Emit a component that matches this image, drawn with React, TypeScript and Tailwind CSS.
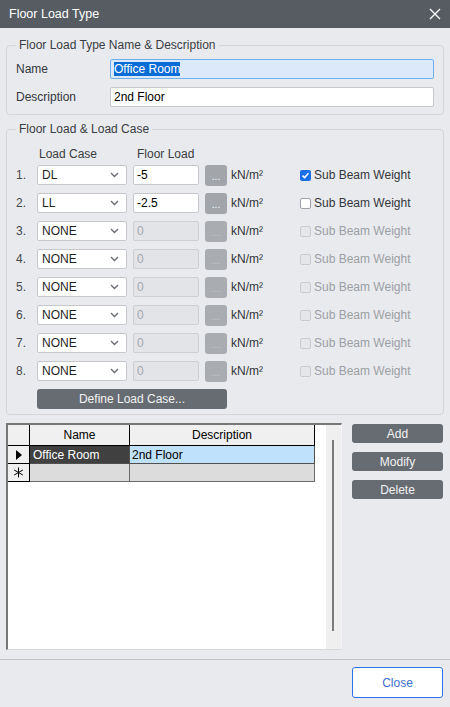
import { useState } from "react";

interface LoadRow {
  n: number;
  loadCase: string;
  floorLoad: string;
  enabled: boolean;
  checked: boolean;
}

const rows: LoadRow[] = [
  { n: 1, loadCase: "DL", floorLoad: "-5", enabled: true, checked: true },
  { n: 2, loadCase: "LL", floorLoad: "-2.5", enabled: true, checked: false },
  { n: 3, loadCase: "NONE", floorLoad: "0", enabled: false, checked: false },
  { n: 4, loadCase: "NONE", floorLoad: "0", enabled: false, checked: false },
  { n: 5, loadCase: "NONE", floorLoad: "0", enabled: false, checked: false },
  { n: 6, loadCase: "NONE", floorLoad: "0", enabled: false, checked: false },
  { n: 7, loadCase: "NONE", floorLoad: "0", enabled: false, checked: false },
  { n: 8, loadCase: "NONE", floorLoad: "0", enabled: false, checked: false },
];

const Chevron = () => (
  <svg width="9" height="6" viewBox="0 0 9 6">
    <path d="M1 1 L4.5 4.5 L8 1" stroke="#6b6f75" strokeWidth="1.4" fill="none" />
  </svg>
);

const LoadCaseRow = ({ row }: { row: LoadRow }) => {
  const [checked, setChecked] = useState(row.checked);
  return (
    <div className="flex items-center h-[20px]">
      <span className="w-[21px] text-[#45484d]">{row.n}.</span>
      <div className="w-[90px] h-[20px] bg-white border border-[#c6c8cd] rounded-[2px] flex items-center justify-between pl-[4px] pr-[7px] text-[#1f1f1f]">
        <span>{row.loadCase}</span>
        <Chevron />
      </div>
      <div
        className={
          row.enabled
            ? "ml-[6px] w-[66px] h-[20px] bg-white border border-[#c6c8cd] rounded-[2px] flex items-center px-[3px] text-black"
            : "ml-[6px] w-[66px] h-[20px] bg-[#e3e4e8] border border-[#cdcfd3] rounded-[2px] flex items-center px-[3px] text-[#a3a6ab]"
        }
      >
        {row.floorLoad}
      </div>
      <div
        className={
          row.enabled
            ? "ml-[6px] w-[22px] h-[21px] bg-[#a2a6ab] rounded-[3px] flex items-center justify-center text-[10px] text-white leading-none pt-[3px]"
            : "ml-[6px] w-[22px] h-[21px] bg-[#a9adb2] rounded-[3px] flex items-center justify-center text-[10px] text-[#c9ccd0] leading-none pt-[3px]"
        }
      >
        ...
      </div>
      <span className="ml-[4px] w-[69px] text-[#34373c]">kN/m²</span>
      <div className="flex items-center">
        {row.enabled ? (
          checked ? (
            <button
              onClick={() => setChecked(false)}
              className="w-[11px] h-[11px] rounded-[2px] bg-[#1a6fe6] flex items-center justify-center"
            >
              <svg width="9" height="9" viewBox="0 0 9 9">
                <path d="M1.5 4.6 L3.6 6.6 L7.5 2.3" stroke="white" strokeWidth="1.5" fill="none" />
              </svg>
            </button>
          ) : (
            <button
              onClick={() => setChecked(true)}
              className="w-[11px] h-[11px] rounded-[2px] bg-white border border-[#9fa3a9]"
            />
          )
        ) : (
          <div className="w-[11px] h-[11px] rounded-[2px] bg-[#e5e6e9] border border-[#c9cbcf]" />
        )}
        <span className={row.enabled ? "ml-[3px] text-[#34373c]" : "ml-[3px] text-[#9c9fa4]"}>
          Sub Beam Weight
        </span>
      </div>
    </div>
  );
};

const App = () => {
  return (
    <div className="w-[450px] h-[707px] bg-[#e9eaee] flex flex-col overflow-hidden text-[12px] leading-[16px] font-['Liberation_Sans',Arial,sans-serif]">
      <div className="h-[28px] bg-[#575c63] flex items-center justify-between pl-[9px] pr-[9px] text-white text-[12.5px] shrink-0">
        <span>Floor Load Type</span>
        <svg width="12" height="12" viewBox="0 0 12 12">
          <path d="M1 1 L11 11 M11 1 L1 11" stroke="white" strokeWidth="1.3" />
        </svg>
      </div>

      <div className="px-[6px] pt-[9px] flex flex-col">
        <fieldset className="border border-[#d4d6da] rounded-[4px] pl-[9px] pr-[9px] pb-[7px]">
          <legend className="px-[3px] text-[#3a3d42]">Floor Load Type Name &amp; Description</legend>
          <div className="pt-[6px] flex flex-col gap-[8px]">
            <div className="flex items-center h-[20px]">
              <span className="w-[94px] text-[#34373c]">Name</span>
              <div className="flex-1 h-[20px] bg-[#dce9fa] border border-[#6db2ee] rounded-[2px] flex items-center px-[3px]">
                <span className="bg-[#0a6cd6] text-white leading-[14px]">Office Room</span>
              </div>
            </div>
            <div className="flex items-center h-[20px]">
              <span className="w-[94px] text-[#34373c]">Description</span>
              <div className="flex-1 h-[20px] bg-white border border-[#c6c8cd] rounded-[2px] flex items-center px-[3px] text-black">
                2nd Floor
              </div>
            </div>
          </div>
        </fieldset>

        <fieldset className="mt-[6px] border border-[#d4d6da] rounded-[4px] pl-[9px] pr-[9px] pb-[5px]">
          <legend className="px-[3px] text-[#3a3d42]">Floor Load &amp; Load Case</legend>
          <div className="pt-[9px] flex text-[#3a3d42]">
            <span className="w-[23px]" />
            <span className="w-[98px]">Load Case</span>
            <span>Floor Load</span>
          </div>
          <div className="mt-[3px] flex flex-col gap-[8px]">
            {rows.map((r) => (
              <LoadCaseRow key={r.n} row={r} />
            ))}
          </div>
          <button className="mt-[8px] ml-[21px] w-[190px] h-[20px] bg-[#676c73] rounded-[3px] text-[#f2f2f2] flex items-center justify-center">
            Define Load Case...
          </button>
        </fieldset>

        <div className="mt-[8px] flex">
          <div className="w-[336px] h-[227px] border-t-2 border-l-2 border-[#777] border-r border-b border-r-[#f4f4f4] border-b-[#d8d8d8] bg-white flex">
            <div className="flex flex-col">
              <div className="flex h-[21px]">
                <div className="w-[22px] bg-[#f0f0f0] border-r border-b border-black" />
                <div className="w-[100px] bg-[#f0f0f0] border-r border-b border-black flex items-center justify-center text-black">
                  Name
                </div>
                <div className="w-[185px] bg-[#f0f0f0] border-r border-b border-black flex items-center justify-center text-black">
                  Description
                </div>
              </div>
              <div className="flex h-[18px]">
                <div className="w-[22px] bg-[#f0f0f0] border-r border-b border-black flex items-center justify-center">
                  <svg width="6" height="10" viewBox="0 0 6 10">
                    <path d="M0 0 L6 5 L0 10 Z" fill="black" />
                  </svg>
                </div>
                <div className="w-[100px] bg-[#404040] border-r border-b border-[#505050] flex items-center pl-[3px] text-white">
                  Office Room
                </div>
                <div className="w-[185px] bg-[#bfe1fc] border-r border-b border-[#505050] flex items-center pl-[2px] text-black">
                  2nd Floor
                </div>
              </div>
              <div className="flex h-[18px]">
                <div className="w-[22px] bg-[#f0f0f0] border-r border-b border-black flex items-center justify-center">
                  <svg width="11" height="11" viewBox="0 0 11 11">
                    <path d="M5.5 0.5 V10.5 M1.2 3 L9.8 8 M9.8 3 L1.2 8" stroke="black" strokeWidth="1" />
                  </svg>
                </div>
                <div className="w-[100px] bg-[#dcdcdc] border-r border-b border-[#6a6a6a]" />
                <div className="w-[185px] bg-[#dcdcdc] border-r border-b border-[#6a6a6a]" />
              </div>
            </div>
            <div className="flex-1" />
            <div className="w-[15px] bg-[#efefef] flex justify-center pt-[15px] pb-[18px]">
              <div className="w-[2px] h-full bg-[#7c7c7c] ml-[-2px]" />
            </div>
          </div>
          <div className="ml-[10px] pt-[1px] flex flex-col gap-[9px]">
            <button className="w-[91px] h-[19px] bg-[#676c73] rounded-[3px] text-[#f2f2f2]">Add</button>
            <button className="w-[91px] h-[19px] bg-[#676c73] rounded-[3px] text-[#f2f2f2]">Modify</button>
            <button className="w-[91px] h-[19px] bg-[#676c73] rounded-[3px] text-[#f2f2f2]">Delete</button>
          </div>
        </div>
      </div>

      <div className="mt-[9px] border-t border-[#c4c6ca] flex justify-end pr-[7px] pt-[7px]">
        <button className="w-[91px] h-[31px] bg-white border border-[#2a72e8] rounded-[3px] text-[#3b6fd2]">
          Close
        </button>
      </div>
    </div>
  );
};

export default App;
